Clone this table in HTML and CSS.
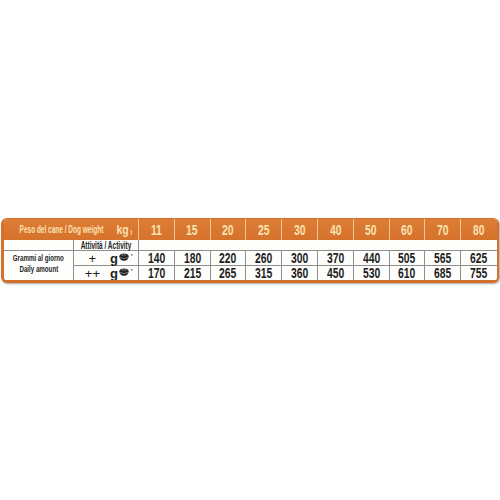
FILE: index.html
```html
<!DOCTYPE html>
<html>
<head>
<meta charset="utf-8">
<link rel="stylesheet" href="styles.css">
</head>
<body>
<div class="page">
  <div class="frame">
    <div class="grid">
      <div class="h h-label"><span class="cond lbl">Peso del cane / Dog weight</span></div>
      <div class="h h-kg"><span class="cond kg">kg</span><span class="tick">)</span></div>
      <div class="h n"><span class="cond num">11</span></div>
      <div class="h n"><span class="cond num">15</span></div>
      <div class="h n"><span class="cond num">20</span></div>
      <div class="h n"><span class="cond num">25</span></div>
      <div class="h n"><span class="cond num">30</span></div>
      <div class="h n"><span class="cond num">40</span></div>
      <div class="h n"><span class="cond num">50</span></div>
      <div class="h n"><span class="cond num">60</span></div>
      <div class="h n"><span class="cond num">70</span></div>
      <div class="h n last"><span class="cond num">80</span></div>

      <div class="c act-blank"></div>
      <div class="c act"><span class="cond lbl">Attività / Activity</span></div>
      <div class="c act-fill"></div>

      <div class="c grammi"><span class="cond lbl line">Grammi al giorno</span><span class="cond lbl line">Daily amount</span></div>
      <div class="c plus">+</div>
      <div class="c gicon">g<svg width="11" height="8" viewBox="0 0 11 8"><ellipse cx="5" cy="3" rx="4.6" ry="2.6" fill="#333"/><path d="M0.4 3.2 Q0.8 7.8 5 7.8 Q9.2 7.8 9.6 3.2 Z" fill="#1e1e1e"/><path d="M0.8 4.6 Q5 6.4 9.2 4.6" stroke="#9a9a9a" stroke-width="0.8" fill="none"/><circle cx="3.6" cy="2" r="0.9" fill="#666"/><circle cx="6" cy="1.8" r="0.9" fill="#666"/></svg><span class="mark">'</span></div>
      <div class="c n"><span class="cond num">140</span></div>
      <div class="c n"><span class="cond num">180</span></div>
      <div class="c n"><span class="cond num">220</span></div>
      <div class="c n"><span class="cond num">260</span></div>
      <div class="c n"><span class="cond num">300</span></div>
      <div class="c n"><span class="cond num">370</span></div>
      <div class="c n"><span class="cond num">440</span></div>
      <div class="c n"><span class="cond num">505</span></div>
      <div class="c n"><span class="cond num">565</span></div>
      <div class="c n last"><span class="cond num">625</span></div>

      <div class="c plus r2">++</div>
      <div class="c gicon r2">g<svg width="11" height="8" viewBox="0 0 11 8"><ellipse cx="5" cy="3" rx="4.6" ry="2.6" fill="#333"/><path d="M0.4 3.2 Q0.8 7.8 5 7.8 Q9.2 7.8 9.6 3.2 Z" fill="#1e1e1e"/><path d="M0.8 4.6 Q5 6.4 9.2 4.6" stroke="#9a9a9a" stroke-width="0.8" fill="none"/><circle cx="3.6" cy="2" r="0.9" fill="#666"/><circle cx="6" cy="1.8" r="0.9" fill="#666"/></svg><span class="mark">'</span></div>
      <div class="c n r2"><span class="cond num">170</span></div>
      <div class="c n r2"><span class="cond num">215</span></div>
      <div class="c n r2"><span class="cond num">265</span></div>
      <div class="c n r2"><span class="cond num">315</span></div>
      <div class="c n r2"><span class="cond num">360</span></div>
      <div class="c n r2"><span class="cond num">450</span></div>
      <div class="c n r2"><span class="cond num">530</span></div>
      <div class="c n r2"><span class="cond num">610</span></div>
      <div class="c n r2"><span class="cond num">685</span></div>
      <div class="c n r2 last"><span class="cond num">755</span></div>
    </div>
  </div>
</div>
</body>
</html>
```

FILE: styles.css
```css
html, body {
  margin: 0;
  padding: 0;
  background: #ffffff;
}

.page {
  width: 500px;
  height: 500px;
  padding: 218px 1px 0 1px;
  box-sizing: border-box;
}

.frame {
  width: 498px;
  height: 65px;
  box-sizing: border-box;
  background: #d2702c;
  border-radius: 6px;
  padding: 1px 2px 3px 3px;
  box-shadow: 1px 1px 2px rgba(0, 0, 0, 0.35);
}

.grid {
  display: grid;
  grid-template-columns: 69px 34px 32px repeat(10, 1fr);
  grid-template-rows: 21px 11px 15px 14px;
  background: #fdfdfb;
  height: 61px;
  border-radius: 4px 4px 2px 2px;
  overflow: hidden;
  font-family: "Liberation Sans", Arial, sans-serif;
  font-weight: bold;
  color: #1e1e1e;
}

.h {
  background: linear-gradient(#dd7d36, #d5722c);
  color: #fbe2ae;
  display: flex;
  align-items: center;
  justify-content: center;
}

.cond {
  display: inline-block;
  white-space: nowrap;
}

.lbl {
  transform: scaleX(0.65);
}

.num {
  transform: scaleX(0.74);
}

.h-label {
  grid-column: 1 / 3;
  font-size: 10px;
  padding-left: 12px;
}

.h-kg {
  font-size: 13px;
  justify-content: flex-start;
  padding-left: 8px;
  border-right: 1px solid #f0c898;
}

.kg {
  transform: scaleX(0.8);
}

.tick {
  font-size: 6px;
  margin-left: 0;
  margin-top: 4px;
}

.h.n {
  font-size: 14px;
  border-right: 1px solid #f0c898;
}

.h.n.last {
  border-right: none;
}

.c {
  display: flex;
  align-items: center;
  justify-content: center;
  border-bottom: 1px solid #8e8e8e;
  box-sizing: border-box;
}

.act-blank {
  grid-column: 1;
  grid-row: 2;
}

.act {
  grid-column: 2 / 4;
  grid-row: 2;
  font-size: 10px;
  border-left: 1px solid #8e8e8e;
  border-right: 1px solid #8e8e8e;
}

.act-fill {
  grid-column: 4 / 14;
  grid-row: 2;
}

.grammi {
  grid-column: 1;
  grid-row: 3 / 5;
  flex-direction: column;
  justify-content: flex-start;
  font-size: 9.5px;
  text-align: center;
  border-bottom: none;
  padding-top: 1px;
}

.line {
  line-height: 11px;
  height: 11px;
}

.plus {
  grid-column: 2;
  font-size: 13px;
  font-weight: normal;
  border-left: 1px solid #8e8e8e;
  justify-content: flex-end;
  padding-right: 11px;
}

.plus.r2 {
  padding-right: 7px;
}

.gicon {
  grid-column: 3;
  font-size: 13px;
  justify-content: flex-start;
  padding-left: 3px;
  border-right: 1px solid #8e8e8e;
}

.gicon svg {
  margin-left: 1px;
  margin-top: -2px;
}

.mark {
  font-size: 7px;
  margin-left: 1px;
  margin-top: -4px;
}

.c.n {
  font-size: 14px;
  border-right: 1px solid #8e8e8e;
}

.c.n.last {
  border-right: none;
}

.r2 {
  border-bottom: none;
}
```
